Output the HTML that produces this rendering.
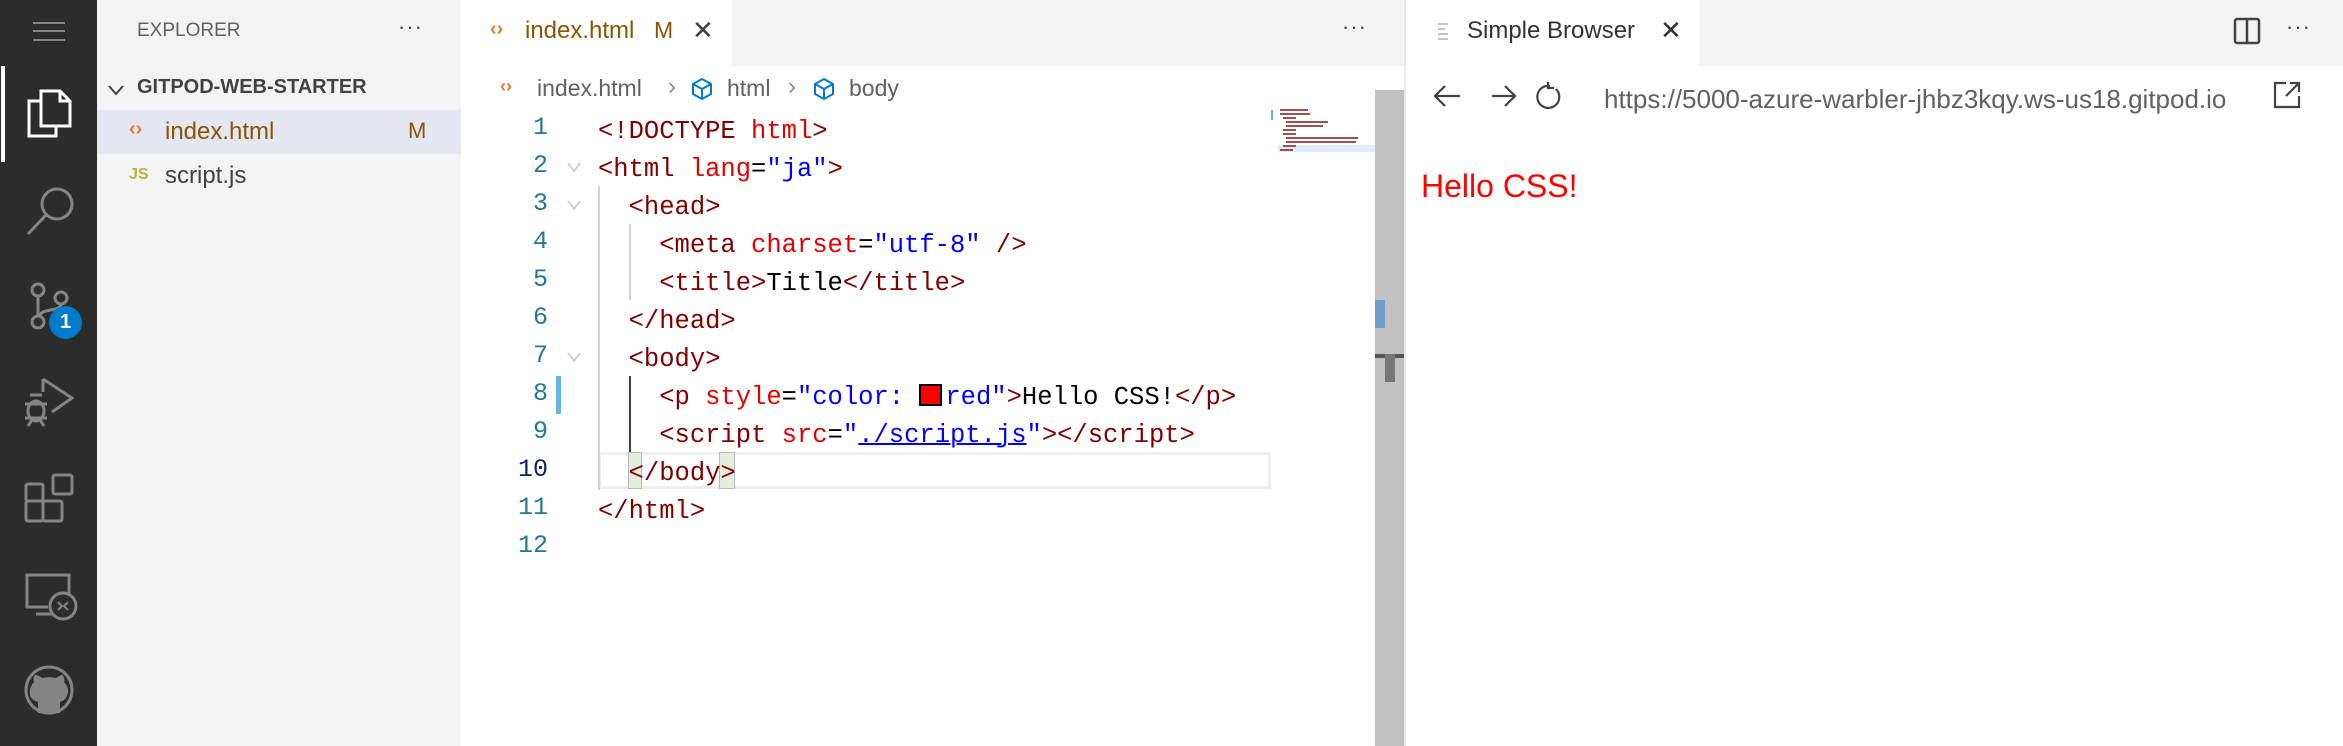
<!DOCTYPE html>
<html><head><meta charset="utf-8"><style>
*{margin:0;padding:0;box-sizing:border-box}
body{width:2343px;height:746px;overflow:hidden;background:#fff;font-family:"Liberation Sans",sans-serif;position:relative}
.a{position:absolute}
.mono{font-family:"Liberation Mono",monospace;font-size:25.5px;white-space:pre}
.t{color:#800000}.at{color:#e50000}.s{color:#0000ff}.k{color:#000}
.ln{position:absolute;width:60px;text-align:right;left:488px;color:#237893;font-family:"Liberation Mono",monospace;font-size:25px}
</style></head><body>
<div class="a" style="left:0;top:0;width:97px;height:746px;background:#2c2c2c"></div>
<div class="a" style="left:1px;top:66px;width:4px;height:96px;background:#fff"></div>
<svg class="a" style="left:0;top:0" width="97" height="746" fill="none" stroke="#858585" stroke-width="3">
<path d="M33 23H65M33 31H65M33 40H65" stroke-width="2"/>
<g stroke="#fff"><path d="M40 101H29V136H56V126"/><path d="M41 91H60L70 101V126H41Z"/><path d="M60 91V101H70"/></g>
<circle cx="57" cy="204" r="15"/><path d="M46 215L28 234"/>
<circle cx="38" cy="290" r="6"/><circle cx="61" cy="298" r="6"/><circle cx="38" cy="322" r="6"/><path d="M38 296V316M61 304C61 312 40 308 40 316"/>
<path d="M43 379L72 398L52 412M43 379V392"/><ellipse cx="36" cy="411" rx="8" ry="10"/><path d="M25 404H47M25 418H47M30 395L42 395M28 426L32 420M44 426L40 420"/>
<rect x="26" y="484" width="17" height="17" rx="2"/><rect x="26" y="501" width="17" height="20" rx="2"/><rect x="43" y="501" width="19" height="20" rx="2"/><rect x="53" y="475" width="19" height="19" rx="2"/>
<path d="M69 596V575H27V607H48M36 614H52"/><circle cx="63" cy="606" r="13"/><path d="M58 602L62 606L58 610M68 602L64 606L68 610" stroke-width="2"/>
<circle cx="49" cy="690" r="23"/>
</svg>
<svg class="a" style="left:0;top:0" width="97" height="746"><path d="M38 713V702C31 700 29 696 30 689C31 686 33 683 34 682C33 679 34 676 35 675C38 675 41 677 42 678C46 677 52 677 56 678C58 677 60 675 63 675C64 678 65 680 64 682C66 684 68 687 68 690C68 696 66 700 60 702V713Z" fill="#858585"/></svg>
<div class="a" style="left:49px;top:306px;width:33px;height:33px;border-radius:50%;background:#007acc;color:#fff;font-size:20px;font-weight:bold;text-align:center;line-height:33px">1</div>
<div class="a" style="left:97px;top:0;width:364px;height:746px;background:#f3f3f3"></div>
<div class="a" style="left:137px;top:20px;font-size:19px;color:#616161">EXPLORER</div>
<div class="a" style="left:398px;top:14px;font-size:22px;color:#424242;letter-spacing:1px">···</div>
<svg class="a" style="left:106px;top:80px" width="20" height="20"><path d="M3 6L10 14L17 6" fill="none" stroke="#424242" stroke-width="2"/></svg>
<div class="a" style="left:137px;top:76px;font-size:20px;font-weight:bold;color:#424242">GITPOD-WEB-STARTER</div>
<div class="a" style="left:97px;top:110px;width:364px;height:44px;background:#e4e6f1"></div>
<div class="a" style="left:129px;top:118px;font-size:20px;color:#e37933;font-weight:bold">‹›</div>
<div class="a" style="left:165px;top:118px;font-size:24px;color:#895503">index.html</div>
<div class="a" style="left:408px;top:118px;font-size:22px;color:#895503">M</div>
<div class="a" style="left:129px;top:166px;font-size:16px;color:#b7b73b;font-weight:bold">JS</div>
<div class="a" style="left:165px;top:162px;font-size:24px;color:#424242">script.js</div>
<div class="a" style="left:461px;top:0;width:944px;height:66px;background:#f3f3f3"></div>
<div class="a" style="left:461px;top:0;width:271px;height:66px;background:#fff"></div>
<div class="a" style="left:490px;top:18px;font-size:20px;color:#e37933;font-weight:bold">‹›</div>
<div class="a" style="left:525px;top:17px;font-size:24px;color:#895503">index.html</div>
<div class="a" style="left:654px;top:17px;font-size:23px;color:#895503">M</div>
<div class="a" style="left:692px;top:15px;font-size:26px;color:#424242">✕</div>
<div class="a" style="left:1342px;top:14px;font-size:22px;color:#424242;letter-spacing:1px">···</div>
<div class="a" style="left:500px;top:76px;font-size:18px;color:#e37933;font-weight:bold">‹›</div>
<div class="a" style="left:537px;top:75px;font-size:23px;color:#616161">index.html</div>
<div class="a" style="left:668px;top:73px;font-size:24px;color:#888">›</div>
<svg class="a" style="left:690px;top:77px" width="24" height="24" fill="none" stroke="#007acc" stroke-width="2"><path d="M12 2L21 7V17L12 22L3 17V7Z M3 7L12 12L21 7 M12 12V22"/></svg>
<div class="a" style="left:727px;top:75px;font-size:23px;color:#616161">html</div>
<div class="a" style="left:788px;top:73px;font-size:24px;color:#888">›</div>
<svg class="a" style="left:812px;top:77px" width="24" height="24" fill="none" stroke="#007acc" stroke-width="2"><path d="M12 2L21 7V17L12 22L3 17V7Z M3 7L12 12L21 7 M12 12V22"/></svg>
<div class="a" style="left:849px;top:75px;font-size:23px;color:#616161">body</div>
<div class="a" style="left:598px;top:452px;width:673px;height:37px;border:3px solid #eeeeee"></div>
<div class="a" style="left:598px;top:186px;width:2px;height:304px;background:#d3d3d3"></div>
<div class="a" style="left:629px;top:224px;width:2px;height:76px;background:#d3d3d3"></div>
<div class="a" style="left:629px;top:376px;width:2px;height:76px;background:#404040"></div>
<div class="a" style="left:556px;top:376px;width:5px;height:38px;background:#6cb2e2"></div>
<div class="a" style="left:628px;top:452px;width:14px;height:37px;background:#e3eedd;border:1px solid #b9b9b9"></div>
<div class="a" style="left:719px;top:452px;width:16px;height:37px;background:#e3eedd;border:1px solid #b9b9b9"></div>
<svg class="a" style="left:563px;top:0" width="24" height="400" fill="none" stroke="#c5c5c5" stroke-width="1.5"><path d="M5 163L11 171L17 163M5 201L11 209L17 201M5 353L11 361L17 353"/></svg>
<div class="ln" style="top:113px">1</div><div class="ln" style="top:151px">2</div><div class="ln" style="top:189px">3</div><div class="ln" style="top:227px">4</div><div class="ln" style="top:265px">5</div><div class="ln" style="top:303px">6</div><div class="ln" style="top:341px">7</div><div class="ln" style="top:379px">8</div><div class="ln" style="top:417px">9</div><div class="ln" style="top:455px;color:#0b216f">10</div><div class="ln" style="top:493px">11</div><div class="ln" style="top:531px">12</div>
<div class="a mono" style="left:598px;top:113px;line-height:38px"><span class="t">&lt;!DOCTYPE </span><span class="at">html</span><span class="t">&gt;</span>
<span class="t">&lt;html </span><span class="at">lang</span><span class="k">=</span><span class="s">"ja"</span><span class="t">&gt;</span>
<span class="t">  &lt;head&gt;</span>
<span class="t">    &lt;meta </span><span class="at">charset</span><span class="k">=</span><span class="s">"utf-8"</span><span class="t"> /&gt;</span>
<span class="t">    &lt;title&gt;</span><span class="k">Title</span><span class="t">&lt;/title&gt;</span>
<span class="t">  &lt;/head&gt;</span>
<span class="t">  &lt;body&gt;</span>
<span class="t">    &lt;p </span><span class="at">style</span><span class="k">=</span><span class="s">"color: <span style="display:inline-block;width:23px;height:22px;background:#f00;border:2px solid #000;vertical-align:-2px;margin-right:3px"></span>red"</span><span class="t">&gt;</span><span class="k">Hello CSS!</span><span class="t">&lt;/p&gt;</span>
<span class="t">    &lt;script </span><span class="at">src</span><span class="k">=</span><span class="s">"<span style="text-decoration:underline;text-decoration-thickness:2px">./script.js</span>"</span><span class="t">&gt;&lt;/script&gt;</span>
<span class="t">  &lt;/body&gt;</span>
<span class="t">&lt;/html&gt;</span>
</div>
<div class="a" style="left:1271px;top:110px;width:2px;height:10px;background:#6cb2e2"></div>
<div class="a" style="left:1278px;top:145px;width:97px;height:7px;background:#e0ecf8"></div>
<svg class="a" style="left:1278px;top:108px" width="97" height="80" stroke="#a05050" stroke-width="2"><path d="M2 2H30M2 6H32M5 10H18M8 14H50M8 18H45M5 22H18M5 26H18M8 30H80M8 34H78M5 38H18M2 42H15"/></svg>
<div class="a" style="left:1375px;top:90px;width:29px;height:656px;background:#c1c1c1"></div>
<div class="a" style="left:1375px;top:300px;width:10px;height:28px;background:#6f9fc8"></div>
<div class="a" style="left:1375px;top:354px;width:29px;height:4px;background:#555"></div>
<div class="a" style="left:1385px;top:354px;width:10px;height:28px;background:#777"></div>
<div class="a" style="left:1404px;top:0;width:2px;height:746px;background:#e7e7e7"></div>
<div class="a" style="left:1406px;top:0;width:937px;height:66px;background:#f3f3f3"></div>
<div class="a" style="left:1406px;top:0;width:293px;height:66px;background:#fff"></div>
<svg class="a" style="left:1436px;top:22px" width="18" height="20" stroke="#c5c5c5" stroke-width="2"><path d="M2 2H12M2 7H9M2 12H12M2 17H12"/></svg>
<div class="a" style="left:1467px;top:17px;font-size:24px;color:#333">Simple Browser</div>
<div class="a" style="left:1660px;top:15px;font-size:26px;color:#333">✕</div>
<svg class="a" style="left:2233px;top:17px" width="28" height="28" fill="none" stroke="#424242" stroke-width="2.5"><rect x="2" y="2" width="24" height="24" rx="2"/><path d="M14 2V26"/></svg>
<div class="a" style="left:2286px;top:14px;font-size:22px;color:#424242;letter-spacing:1px">···</div>
<svg class="a" style="left:1432px;top:80px" width="150" height="36" fill="none" stroke="#424242" stroke-width="2.2"><path d="M4 16H28M13 6L3 16L13 26"/><path d="M60 16H82M73 6L83 16L73 26"/><path d="M118 6A11 11 0 1 0 124 9M116 2V8H122"/></svg>
<div class="a" style="left:1604px;top:84px;font-size:26px;color:#616161">https://5000-azure-warbler-jhbz3kqy.ws-us18.gitpod.io</div>
<svg class="a" style="left:2272px;top:80px" width="30" height="30" fill="none" stroke="#424242" stroke-width="2.2"><path d="M14 3H3V27H27V16M18 3H27V12M27 3L14 16"/></svg>
<div class="a" style="left:1421px;top:168px;font-size:32px;color:#f00">Hello CSS!</div>
</body></html>
